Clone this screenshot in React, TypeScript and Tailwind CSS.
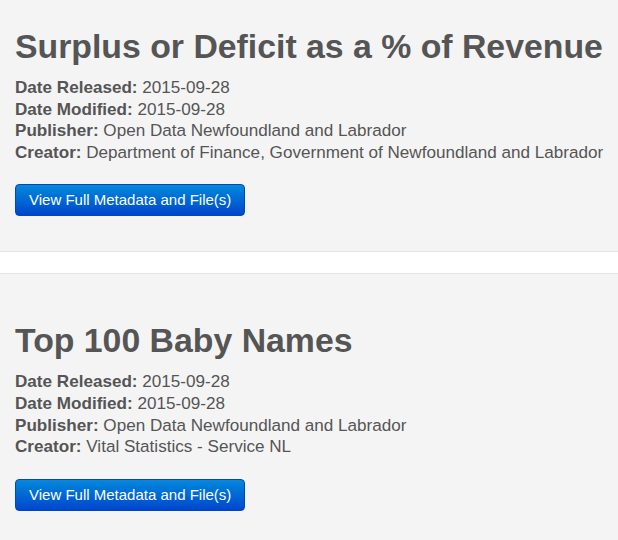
import React from "react";

type Item = {
  title: string;
  released: string;
  modified: string;
  publisher: string;
  creator: string;
};

const items: Item[] = [
  {
    title: "Surplus or Deficit as a % of Revenue",
    released: "2015-09-28",
    modified: "2015-09-28",
    publisher: "Open Data Newfoundland and Labrador",
    creator: "Department of Finance, Government of Newfoundland and Labrador",
  },
  {
    title: "Top 100 Baby Names",
    released: "2015-09-28",
    modified: "2015-09-28",
    publisher: "Open Data Newfoundland and Labrador",
    creator: "Vital Statistics - Service NL",
  },
];

function Card({ item, first }: { item: Item; first: boolean }) {
  return (
    <section
      className={`bg-[#f4f4f4] px-[15px] pb-[35px] ${
        first ? "pt-[25px] border-b border-[#e4e4e4]" : "pt-[45px] border-y border-[#e4e4e4]"
      }`}
    >
      <h2 className="text-[33.8px] leading-[42px] font-bold text-[#555555] whitespace-nowrap">
        {item.title}
      </h2>
      <div className="mt-[10px] text-[17.1px] leading-[21.6px] text-[#555555] whitespace-nowrap">
        <div>
          <b>Date Released:</b> {item.released}
        </div>
        <div>
          <b>Date Modified:</b> {item.modified}
        </div>
        <div>
          <b>Publisher:</b> {item.publisher}
        </div>
        <div>
          <b>Creator:</b> {item.creator}
        </div>
      </div>
      <button className="mt-[21px] h-[32px] px-[13px] rounded-[4px] border border-[#0047b8] bg-gradient-to-b from-[#0a88dc] to-[#0044cc] text-white text-[15px] leading-[20px]">
        View Full Metadata and File(s)
      </button>
    </section>
  );
}

export default function App() {
  return (
    <div
      className="w-[618px] h-[540px] overflow-hidden bg-white"
      style={{ fontFamily: '"Liberation Sans", Arial, sans-serif' }}
    >
      <Card item={items[0]} first />
      <div className="h-[21px] bg-white" />
      <Card item={items[1]} first={false} />
    </div>
  );
}
